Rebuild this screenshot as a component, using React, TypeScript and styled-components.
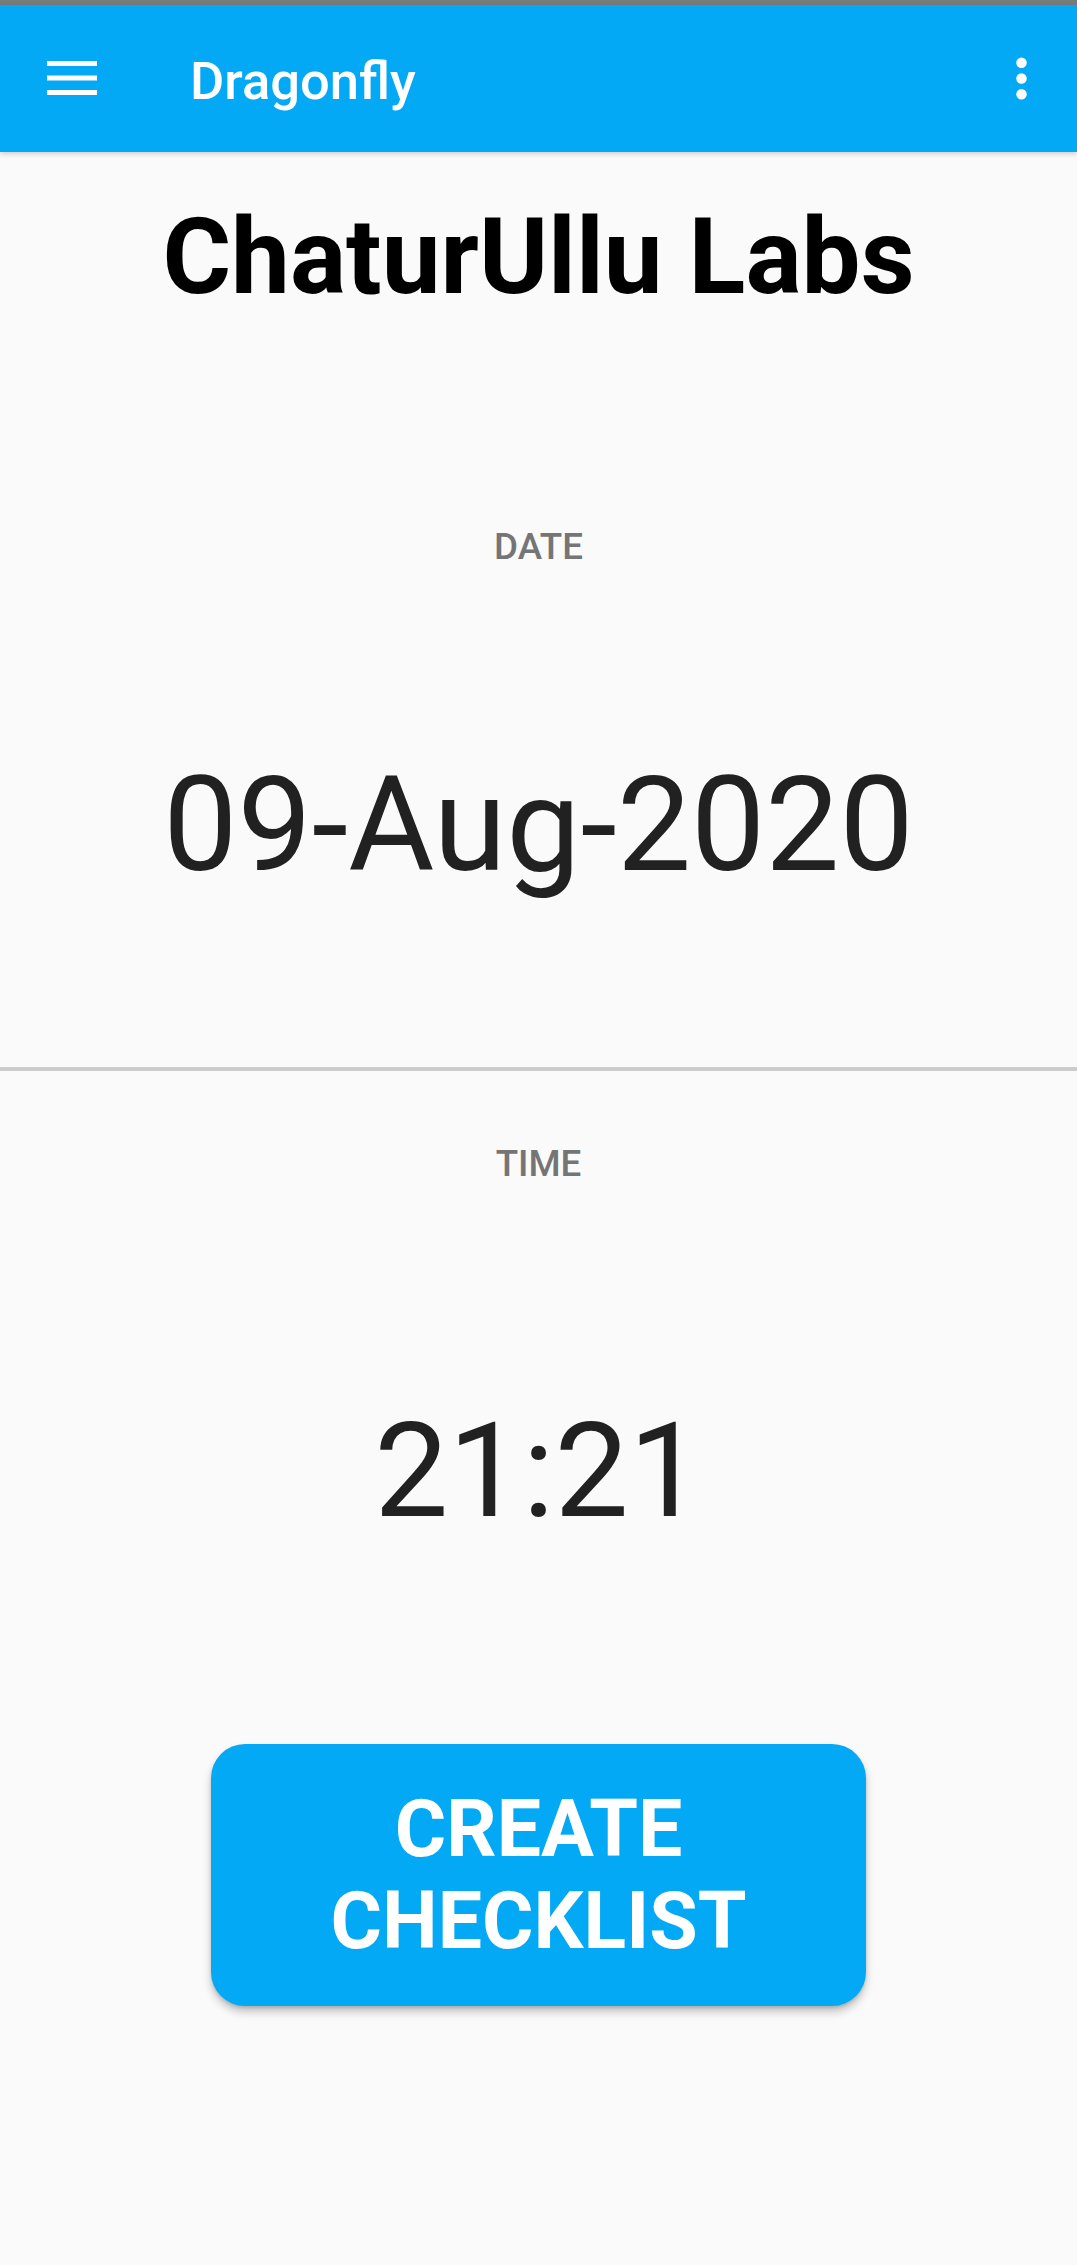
import React from "react";
import styled, { createGlobalStyle } from "styled-components";

const GlobalStyle = createGlobalStyle`
  html, body {
    margin: 0;
    padding: 0;
    background: #fafafa;
  }
  body {
    font-family: Roboto, "Noto Sans", "Liberation Sans", sans-serif;
  }
  * { box-sizing: border-box; }
`;

const Page = styled.div`
  min-height: 2265px;
  background: #fafafa;
  display: flex;
  flex-direction: column;
`;

const StatusStrip = styled.div`
  height: 5px;
  background: #787b7c;
`;

const Toolbar = styled.header`
  height: 147px;
  background: #03a9f4;
  display: flex;
  align-items: center;
  padding: 0 0 0 47px;
  box-shadow: 0 2px 5px rgba(0, 0, 0, 0.18);
  position: relative;
  z-index: 1;
`;

const IconButton = styled.button`
  border: 0;
  background: transparent;
  padding: 0;
  display: flex;
  align-items: center;
  justify-content: center;
  cursor: pointer;
`;

const ToolbarTitle = styled.h1`
  margin: 6px 0 0 93px;
  font-family: Roboto, sans-serif;
  font-weight: 500;
  font-size: 52.5px;
  line-height: 1.172;
  color: #ffffff;
  flex: 1;
`;

const OverflowButton = styled(IconButton)`
  width: 63px;
  height: 63px;
  margin-right: 24px;
`;

const Content = styled.main`
  display: flex;
  flex-direction: column;
  align-items: stretch;
`;

const Heading = styled.h2`
  margin: 44px 0 0;
  text-align: center;
  font-family: Roboto, sans-serif;
  font-weight: 700;
  font-size: 105px;
  line-height: 1.172;
  color: #000000;
`;

const Label = styled.div<{ $top: number }>`
  margin-top: ${(p) => p.$top}px;
  text-align: center;
  font-family: Roboto, sans-serif;
  font-weight: 500;
  font-size: 36.75px;
  line-height: 1.172;
  color: #757575;
  text-transform: uppercase;
`;

const BigValue = styled.div<{ $top: number }>`
  margin-top: ${(p) => p.$top}px;
  text-align: center;
  font-family: Roboto, sans-serif;
  font-weight: 400;
  font-size: 132px;
  line-height: 1.172;
  color: #212121;
`;

const Divider = styled.hr`
  margin: 164px 0 0;
  border: 0;
  height: 4px;
  background: #cccccc;
`;

const ButtonRow = styled.div`
  display: flex;
  justify-content: center;
  margin-top: 195px;
`;

const PrimaryButton = styled.button`
  width: 655px;
  height: 262px;
  border: 0;
  border-radius: 34px;
  background: #03a9f4;
  color: #ffffff;
  font-family: Roboto, sans-serif;
  font-weight: 700;
  font-size: 78.75px;
  line-height: 92px;
  text-transform: uppercase;
  padding: 0 40px;
  box-shadow: 0 6px 9px rgba(0, 0, 0, 0.22), 0 2px 3px rgba(0, 0, 0, 0.12);
  cursor: pointer;
`;

const MenuIcon = () => (
  <svg width="50" height="35" viewBox="0 0 50 35" aria-hidden="true">
    <rect x="0" y="0" width="50" height="5" fill="#fff" />
    <rect x="0" y="14.5" width="50" height="5" fill="#fff" />
    <rect x="0" y="29" width="50" height="5" fill="#fff" />
  </svg>
);

const MoreIcon = () => (
  <svg width="63" height="63" viewBox="0 0 24 24" aria-hidden="true">
    <circle cx="12" cy="6" r="2" fill="#fff" />
    <circle cx="12" cy="12" r="2" fill="#fff" />
    <circle cx="12" cy="18" r="2" fill="#fff" />
  </svg>
);

export default function App() {
  return (
    <Page>
      <GlobalStyle />
      <StatusStrip />
      <Toolbar>
        <IconButton aria-label="menu">
          <MenuIcon />
        </IconButton>
        <ToolbarTitle>Dragonfly</ToolbarTitle>
        <OverflowButton aria-label="more options">
          <MoreIcon />
        </OverflowButton>
      </Toolbar>
      <Content>
        <Heading>ChaturUllu Labs</Heading>
        <Label $top={206}>Date</Label>
        <BigValue $top={180}>09-Aug-2020</BigValue>
        <Divider />
        <Label $top={71}>Time</Label>
        <BigValue $top={209}>21:21</BigValue>
        <ButtonRow>
          <PrimaryButton>Create Checklist</PrimaryButton>
        </ButtonRow>
      </Content>
    </Page>
  );
}
